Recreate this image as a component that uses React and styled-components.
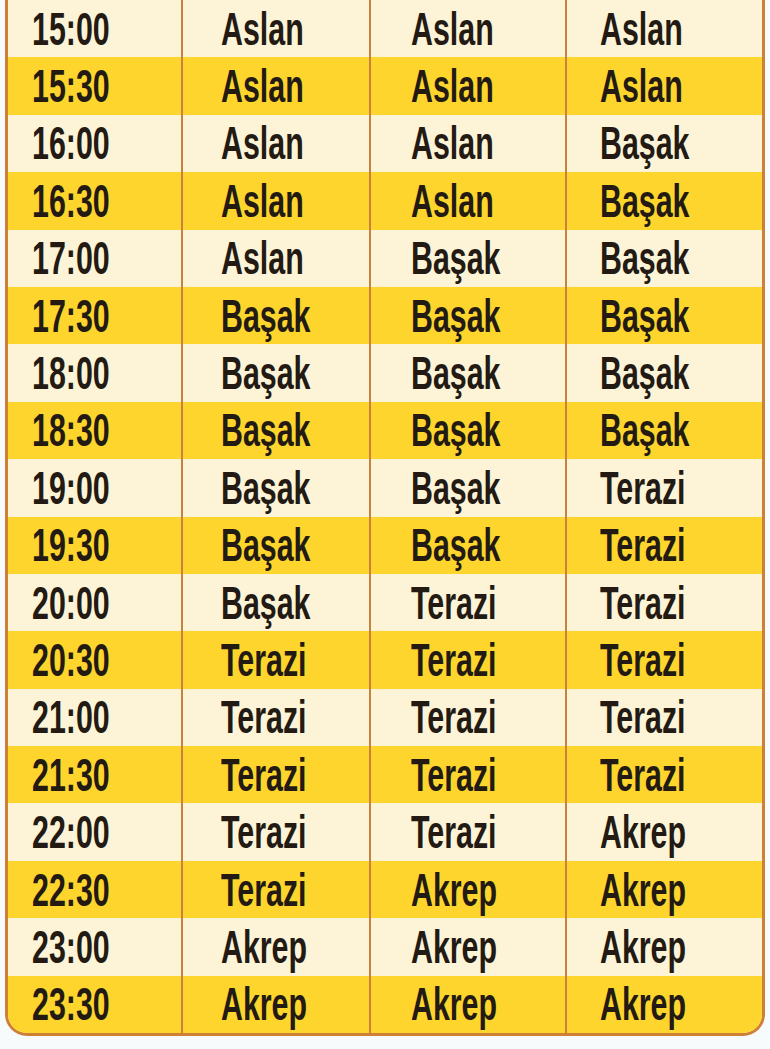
import React from 'react'
import styled, { createGlobalStyle } from 'styled-components'

const GlobalStyle = createGlobalStyle`
  html, body {
    margin: 0;
    padding: 0;
    background: #f8fbfc;
  }
`

const Table = styled.div`
  width: 760px;
  margin-left: 5px;
  border: 3px solid #d07f36;
  border-top: none;
  border-radius: 0 0 22px 22px;
  overflow: hidden;
  box-sizing: border-box;
`

const Row = styled.div`
  display: grid;
  grid-template-columns: 173px 188px 196px 1fr;
  height: 57.4px;
  background: ${p => (p.$alt ? '#fdd52c' : '#fdf4d8')};
`

const Cell = styled.div`
  display: flex;
  align-items: center;
  padding-left: ${p => p.$pad}px;
  border-left: ${p => (p.$first ? 'none' : '2px solid #c8823e')};
  font-family: "Liberation Sans", Arial, sans-serif;
  font-weight: 700;
  font-size: 46px;
  color: #221a13;
  overflow: hidden;
  white-space: nowrap;
`

const Text = styled.span`
  display: inline-block;
  transform: scaleX(0.66);
  transform-origin: left center;
`

const rows = [
  ['15:00', 'Aslan', 'Aslan', 'Aslan'],
  ['15:30', 'Aslan', 'Aslan', 'Aslan'],
  ['16:00', 'Aslan', 'Aslan', 'Başak'],
  ['16:30', 'Aslan', 'Aslan', 'Başak'],
  ['17:00', 'Aslan', 'Başak', 'Başak'],
  ['17:30', 'Başak', 'Başak', 'Başak'],
  ['18:00', 'Başak', 'Başak', 'Başak'],
  ['18:30', 'Başak', 'Başak', 'Başak'],
  ['19:00', 'Başak', 'Başak', 'Terazi'],
  ['19:30', 'Başak', 'Başak', 'Terazi'],
  ['20:00', 'Başak', 'Terazi', 'Terazi'],
  ['20:30', 'Terazi', 'Terazi', 'Terazi'],
  ['21:00', 'Terazi', 'Terazi', 'Terazi'],
  ['21:30', 'Terazi', 'Terazi', 'Terazi'],
  ['22:00', 'Terazi', 'Terazi', 'Akrep'],
  ['22:30', 'Terazi', 'Akrep', 'Akrep'],
  ['23:00', 'Akrep', 'Akrep', 'Akrep'],
  ['23:30', 'Akrep', 'Akrep', 'Akrep'],
]

const pads = [24, 38, 40, 33]

export default function App() {
  return (
    <>
      <GlobalStyle />
      <Table>
        {rows.map((r, i) => (
          <Row key={r[0]} $alt={i % 2 === 1}>
            {r.map((t, j) => (
              <Cell key={j} $first={j === 0} $pad={pads[j]}>
                <Text>{t}</Text>
              </Cell>
            ))}
          </Row>
        ))}
      </Table>
    </>
  )
}
